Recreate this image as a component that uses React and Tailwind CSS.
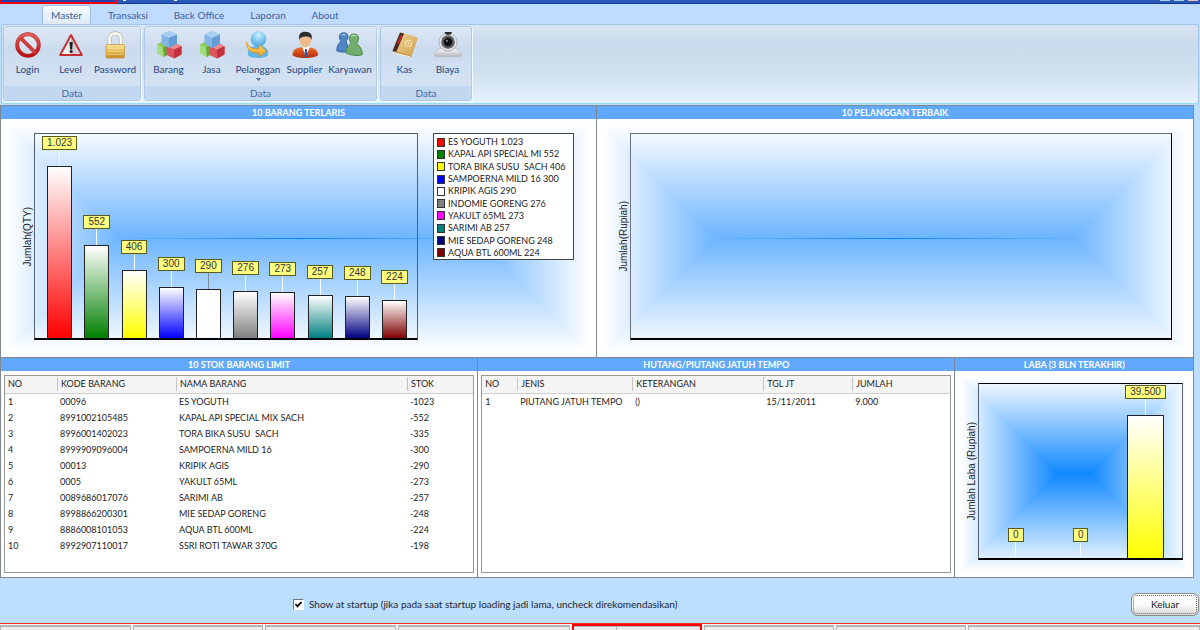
import React, { useState } from 'react';

const BEST_SELLERS = [
  { name: 'ES YOGUTH', value: 1023, label: '1.023', swatch: 'bg-[#ff0000]', bar: 'bg-linear-to-b/srgb from-white to-[#ff0000]' },
  { name: 'KAPAL API SPECIAL MI', value: 552, label: '552', swatch: 'bg-[#008000]', bar: 'bg-linear-to-b/srgb from-white to-[#008000]' },
  { name: 'TORA BIKA SUSU  SACH', value: 406, label: '406', swatch: 'bg-[#ffff00]', bar: 'bg-linear-to-b/srgb from-white to-[#ffff00]' },
  { name: 'SAMPOERNA MILD 16', value: 300, label: '300', swatch: 'bg-[#0000ff]', bar: 'bg-linear-to-b/srgb from-white to-[#0000ff]' },
  { name: 'KRIPIK AGIS', value: 290, label: '290', swatch: 'bg-white', bar: 'bg-white', stem: 'bg-[#7f8f9f]' },
  { name: 'INDOMIE GORENG', value: 276, label: '276', swatch: 'bg-[#808080]', bar: 'bg-linear-to-b/srgb from-white to-[#808080]' },
  { name: 'YAKULT 65ML', value: 273, label: '273', swatch: 'bg-[#ff00ff]', bar: 'bg-linear-to-b/srgb from-white to-[#ff00ff]' },
  { name: 'SARIMI AB', value: 257, label: '257', swatch: 'bg-[#008080]', bar: 'bg-linear-to-b/srgb from-white to-[#008080]' },
  { name: 'MIE SEDAP GORENG', value: 248, label: '248', swatch: 'bg-[#000080]', bar: 'bg-linear-to-b/srgb from-white to-[#000080]' },
  { name: 'AQUA BTL 600ML', value: 224, label: '224', swatch: 'bg-[#800000]', bar: 'bg-linear-to-b/srgb from-white to-[#800000]' },
];

const PROFIT = [
  { name: 'bulan-1', value: 0, label: '0' },
  { name: 'bulan-2', value: 0, label: '0' },
  { name: 'bulan-3', value: 39500, label: '39.500', bar: 'bg-linear-to-b/srgb from-white to-[#ffff00]' },
];

const STOCK_COLUMNS = [
  { title: 'NO', width: 'w-[52px]' },
  { title: 'KODE BARANG', width: 'w-[119px]' },
  { title: 'NAMA BARANG', width: 'w-[231px]' },
  { title: 'STOK', width: '' },
];

const STOCK_ROWS = [
  ['1', '00096', 'ES YOGUTH', '-1023'],
  ['2', '8991002105485', 'KAPAL API SPECIAL MIX SACH', '-552'],
  ['3', '8996001402023', 'TORA BIKA SUSU  SACH', '-335'],
  ['4', '8999909096004', 'SAMPOERNA MILD 16', '-300'],
  ['5', '00013', 'KRIPIK AGIS', '-290'],
  ['6', '0005', 'YAKULT 65ML', '-273'],
  ['7', '0089686017076', 'SARIMI AB', '-257'],
  ['8', '8998866200301', 'MIE SEDAP GORENG', '-248'],
  ['9', '8886008101053', 'AQUA BTL 600ML', '-224'],
  ['10', '8992907110017', 'SSRI ROTI TAWAR 370G', '-198'],
];

const DEBT_COLUMNS = [
  { title: 'NO', width: 'w-[35px]' },
  { title: 'JENIS', width: 'w-[115px]' },
  { title: 'KETERANGAN', width: 'w-[131px]' },
  { title: 'TGL JT', width: 'w-[89px]' },
  { title: 'JUMLAH', width: '' },
];

const DEBT_ROWS = [['1', 'PIUTANG JATUH TEMPO', '()', '15/11/2011', '9.000']];

const ICON = 'w-7 h-7 shrink-0';

const LoginIcon = () => (
  <svg className={ICON} viewBox="0 0 28 28">
    <defs>
      <linearGradient id="banRed" x1="0" y1="0" x2="0" y2="1">
        <stop offset="0" stopColor="#e2605c" />
        <stop offset="1" stopColor="#b80f12" />
      </linearGradient>
      <linearGradient id="banFace" x1="0" y1="0" x2="0" y2="1">
        <stop offset="0" stopColor="#e9eef5" />
        <stop offset="1" stopColor="#c9d6e6" />
      </linearGradient>
    </defs>
    <circle cx="14" cy="14" r="10.8" fill="url(#banFace)" stroke="#b3272a" strokeWidth="3.8" />
    <circle cx="14" cy="14" r="10.8" fill="none" stroke="url(#banRed)" strokeWidth="2.8" />
    <path d="M6.6 7l14.6 14.6" stroke="#b3272a" strokeWidth="3.6" />
    <path d="M6.4 6.8l15 15" stroke="#d2403f" strokeWidth="2.4" />
  </svg>
);

const LevelIcon = () => (
  <svg className={ICON} viewBox="0 0 28 28">
    <defs>
      <linearGradient id="warnFace" x1="0" y1="0" x2="1" y2="0">
        <stop offset="0" stopColor="#ffffff" />
        <stop offset=".5" stopColor="#e8e8e8" />
        <stop offset=".5" stopColor="#c2c4c8" />
        <stop offset="1" stopColor="#e6e8ec" />
      </linearGradient>
    </defs>
    <path d="M14 4L24.800 24H3.200z" fill="url(#warnFace)" stroke="#c62c30" strokeWidth="1.900" strokeLinejoin="round" />
    <path d="M12.400 11h3.400l-.7 7.500h-2z" fill="#222" />
    <circle cx="14.100" cy="20.500" r="1.500" fill="#222" />
  </svg>
);

const PasswordIcon = () => (
  <svg className={ICON} viewBox="0 0 28 28">
    <defs>
      <linearGradient id="lockBody" x1="0" y1="0" x2="0" y2="1">
        <stop offset="0" stopColor="#fbe6a0" />
        <stop offset=".45" stopColor="#e9bd55" />
        <stop offset="1" stopColor="#c08a26" />
      </linearGradient>
    </defs>
    <path d="M8.500 14.500V8c0-7.600 11.500-7.600 11.500 0v6.500" fill="none" stroke="#b0b0a8" strokeWidth="4" />
    <path d="M8.500 14.500V8c0-7.600 11.500-7.600 11.500 0v6.500" fill="none" stroke="#f7f7f2" strokeWidth="2.800" />
    <rect x="5" y="13.500" width="18.500" height="13.500" rx="1" fill="url(#lockBody)" stroke="#c79a45" strokeWidth=".8" />
    <path d="M6 17.500h16.500M6 20.500h16.500M6 23.500h16.500" stroke="#fff1bd" strokeWidth=".8" opacity=".5" />
  </svg>
);

const CubesIcon = () => (
  <svg className={ICON} viewBox="0 0 28 28">
    <path d="M8 10l6 3v9.500L9 26l-7-4v-8.500z" fill="#8ccb5a" />
    <path d="M2 13.500l6 3L9 26l-7-4z" fill="#a5dc7c" />
    <path d="M8 16.500l6-3v9L9 26z" fill="#5da836" />
    <path d="M19 11.500l7.500 3.500v8.500L19 27.500l-7.500-3.500v-9z" fill="#d9545c" />
    <path d="M19 18.500l7.500-3.500v8.500L19 27.500z" fill="#c2323d" />
    <path d="M11.500 15l7.500 3.500 7.500-3.500-7.500-3.500z" fill="#ec8d90" />
    <path d="M14 0l8 3.500v9L14 17l-7.500-4.500v-9z" fill="#82b5e6" />
    <path d="M6.500 3.500L14 0l8 3.500L14 7z" fill="#a8cff2" />
    <path d="M14 7l8-3.500v9L14 17z" fill="#649dd8" />
  </svg>
);

const CustomerIcon = () => (
  <svg className={ICON} viewBox="0 0 28 28">
    <defs>
      <radialGradient id="custHead" cx=".5" cy=".25" r=".8">
        <stop offset="0" stopColor="#c8efff" />
        <stop offset="1" stopColor="#3ba2dc" />
      </radialGradient>
      <linearGradient id="custArrow" x1="0" y1="0" x2="0" y2="1">
        <stop offset="0" stopColor="#ffe07a" />
        <stop offset="1" stopColor="#ef9a1c" />
      </linearGradient>
    </defs>
    <path d="M4 24c-1-8 5-9 10.500-9S25 17 24 24c-1 4-19 4-20 0z" fill="#5eb7e8" />
    <circle cx="14.500" cy="8" r="7.800" fill="url(#custHead)" />
    <path d="M2.500 11c1.500 5 6 7.500 12.500 6.500v-4L22.500 20 15 26v-4C7 22.500 2 18 2.500 11z" fill="url(#custArrow)" stroke="#d98a14" strokeWidth=".7" />
  </svg>
);

const SupplierIcon = () => (
  <svg className={ICON} viewBox="0 0 28 28">
    <defs>
      <linearGradient id="suitRed" x1="0" y1="0" x2="0" y2="1">
        <stop offset="0" stopColor="#f0702a" />
        <stop offset="1" stopColor="#b52a08" />
      </linearGradient>
    </defs>
    <path d="M1.500 24c0-6 5-8 12.500-8s13 2 13 8c-2 4-23.500 4-25.500 0z" fill="url(#suitRed)" />
    <path d="M11 15.500l4 10 4-10z" fill="#fff" />
    <path d="M14 18h2l1 8h-3.500z" fill="#2c5fb0" />
    <ellipse cx="14.500" cy="9" rx="5.600" ry="7.500" fill="#efbb8c" />
    <path d="M8.500 9C7 3 10 .8 14 .8c5.500 0 8 3 6.300 8.200-.8-3-2-3.700-5-3.500-3 .2-5.500 0-6.800 3.500z" fill="#2b2b2f" />
  </svg>
);

const EmployeeIcon = () => (
  <svg className={ICON} viewBox="0 0 28 28">
    <path d="M3.500 5.500C3.500.5 12 .5 12 5.500c0 2.500-1 3.500-2 4.500l3 10C9 21.500 4 21.500.8 19.800c0-4 1.200-7 4.200-9.300-1-1.300-1.500-2.800-1.500-5z" fill="#4f86c6" stroke="#2f63a5" strokeWidth="1" />
    <path d="M13.500 7c0-5.300 9-5.300 9 0 0 2.700-1 4-2 5.500 3.500 2.500 5.500 6 6 11-3.500 1.800-11 1.200-16.500-1.500.3-4 1.500-7 5-9.500-1-1.500-1.500-3-1.500-5.500z" fill="#74ad70" stroke="#4a8a4e" strokeWidth="1" />
    <path d="M15.500 5.800c.8-1.800 3.700-2 5-.4" stroke="#b2dca9" strokeWidth="1.200" fill="none" />
    <path d="M5.500 4.500c.8-1.300 3-1.500 4-.5" stroke="#a5c6ea" strokeWidth="1.200" fill="none" />
  </svg>
);

const CashIcon = () => (
  <svg className={ICON} viewBox="0 0 28 28">
    <defs>
      <linearGradient id="bookTan" x1="0" y1="0" x2="1" y2="1">
        <stop offset="0" stopColor="#f0d391" />
        <stop offset="1" stopColor="#d0a352" />
      </linearGradient>
    </defs>
    <path d="M9 2.500l17.500 5-6.500 19L2 21z" fill="#b58c48" />
    <path d="M10 1.500l17 5-7 18.500L4 20z" fill="url(#bookTan)" />
    <path d="M9 1.500l4 1L5.500 20.500 1.500 20z" fill="#4a2a22" />
    <path d="M10.500 4.500l-3.500 8" stroke="#d9262b" strokeWidth="1.800" />
    <circle cx="17.500" cy="12.500" r="3.200" fill="none" stroke="#fbecc4" strokeWidth="1" />
    <circle cx="17.500" cy="12.500" r="1" fill="#fbecc4" />
    <path d="M2 21.500l17.500 4.500" stroke="#fff3d2" strokeWidth="1" />
  </svg>
);

const CostIcon = () => (
  <svg className={ICON} viewBox="0 0 28 28">
    <defs>
      <linearGradient id="camBase" x1="0" y1="0" x2="0" y2="1">
        <stop offset="0" stopColor="#ffffff" />
        <stop offset="1" stopColor="#b4b7bd" />
      </linearGradient>
    </defs>
    <path d="M.5 24c1-4.500 4-7 13.500-7s12.500 2.500 13.500 7c0 1.300-1 1.800-2 1.800H2.500c-1 0-2-.5-2-1.800z" fill="url(#camBase)" stroke="#b2b6bd" strokeWidth=".6" />
    <circle cx="14" cy="11" r="9" fill="#e3e5e8" stroke="#a2a5ab" strokeWidth=".8" />
    <circle cx="14" cy="11" r="6.800" fill="#5a5c60" />
    <circle cx="14" cy="11" r="4.300" fill="#111" />
    <circle cx="13" cy="9.800" r="1" fill="#8a9098" />
    <path d="M10.500 1h7.500l-1.500 2.800h-4.500z" fill="#2b2b2e" />
  </svg>
);

const TABS = [
  { name: 'Master', width: 'w-[49px]' },
  { name: 'Transaksi', width: 'w-[74px]' },
  { name: 'Back Office', width: 'w-[68px]' },
  { name: 'Laporan', width: 'w-[70px]' },
  { name: 'About', width: 'w-[44px]' },
];

const GROUPS = [
  [
    { name: 'Login', icon: LoginIcon, width: 'w-[43px]' },
    { name: 'Level', icon: LevelIcon, width: 'w-[43px]' },
    { name: 'Password', icon: PasswordIcon, width: 'w-[46px]' },
  ],
  [
    { name: 'Barang', icon: CubesIcon, width: 'w-[43px]' },
    { name: 'Jasa', icon: CubesIcon, width: 'w-[43px]' },
    { name: 'Pelanggan', icon: CustomerIcon, width: 'w-[50px]', menu: true },
    { name: 'Supplier', icon: SupplierIcon, width: 'w-[43px]' },
    { name: 'Karyawan', icon: EmployeeIcon, width: 'w-[48px]' },
  ],
  [
    { name: 'Kas', icon: CashIcon, width: 'w-[43px]' },
    { name: 'Biaya', icon: CostIcon, width: 'w-[43px]' },
  ],
];

const TitleBar = () => (
  <div className="flex h-1 items-start bg-[#2a58b8] border-b border-[#0d3a94]">
    <div className="h-1 w-[117px] bg-[#2340a8] border-x-2 border-b-2 border-[#f00010]" />
    <div className="ml-[6px] h-px w-[3px] bg-white" />
    <div className="ml-[48px] h-px w-[3px] bg-white" />
    <div className="ml-auto mr-[2px] flex gap-1">
      <div className="h-px w-[10px] bg-[#a9d0e0]" />
      <div className="h-px w-[10px] bg-[#a9d0e0]" />
      <div className="h-px w-[10px] bg-[#f0c0b0]" />
    </div>
  </div>
);

const RibbonGroup = ({ items }) => (
  <div className="flex flex-col h-[75px] border border-[#b0c9e6] rounded-[3px] bg-[linear-gradient(to_bottom,#dde8f5,#cbdbee_30%,#d8e6f6)] shadow-[1px_1px_0_#f3f9ff]">
    <div className="flex flex-1 px-[2px] pt-[4px]">
      {items.map(({ name, icon: Icon, width, menu }) => (
        <button key={name} className={`flex flex-col items-center ${width}`}>
          <Icon />
          <span className="mt-[4px] leading-[12px] whitespace-nowrap">{name}</span>
          {menu && (
            <svg className="mt-[3px] h-[3px] w-[5px]" viewBox="0 0 5 3">
              <path d="M0 0h5L2.500 3z" fill="#4d6fa5" />
            </svg>
          )}
        </button>
      ))}
    </div>
    <div className="h-[14px] leading-[14px] text-center text-[#3e6aaa] bg-[#c1d8f0] rounded-b-[2px]">Data</div>
  </div>
);

// Rectangular gradient: of the horizontal and the vertical ramp the lighter one wins.
const ChartBackdrop = ({ strong }) =>
  strong ? (
    <div className="absolute inset-0 bg-blend-lighten bg-[linear-gradient(to_right,#fff_6px,#1088ff_103px,#1088ff_calc(100%-103px),#fff_calc(100%-6px)),linear-gradient(to_bottom,#fff_6px,#1088ff_50%,#fff_calc(100%-6px))]" />
  ) : (
    <div className="absolute inset-0">
      <div className="absolute inset-0 bg-blend-lighten bg-[linear-gradient(to_right,#fff_6px,#6db5ff_119px,#6db5ff_calc(100%-119px),#fff_calc(100%-6px)),linear-gradient(to_bottom,#fff_6px,#6db5ff_50%,#fff_calc(100%-6px))]" />
      <div className="absolute inset-x-[119px] top-1/2 h-px bg-linear-to-r/srgb from-[#6db5ff] via-[#0a84ff] to-[#6db5ff]" />
    </div>
  );

const Bars = ({ data, max, barWidth }) => (
  <div className="flex h-full items-end">
    {data.map((item) => (
      <div key={item.name} className="flex flex-1 h-full flex-col items-center justify-end">
        <div className="flex h-[14px] items-center border border-[#5a5a1e] bg-[#ffff80] px-1 leading-[12px] text-[#333]">
          {item.label}
        </div>
        <div className={`h-4 w-px shrink-0 ${item.stem || 'bg-[#f4faff]'}`} />
        {item.value > 0 && (
          <div
            className={`shrink-0 border border-b-0 border-[#222] ${barWidth} ${item.bar}`}
            style={{ height: `${(item.value / max) * 100}%` }}
          />
        )}
      </div>
    ))}
  </div>
);

const AxisLabel = ({ children, width }) => (
  <div className={`flex shrink-0 items-center justify-end ${width}`}>
    <span className="[writing-mode:vertical-rl] rotate-180 leading-[12px] whitespace-nowrap text-[#222]">{children}</span>
  </div>
);

const Legend = () => (
  <ul className="flex h-[127px] w-[141px] shrink-0 flex-col border border-[#444] bg-white pt-[2px] pl-[3px] font-[Lato,sans-serif] text-[9px] text-[#222]">
    {BEST_SELLERS.map((item) => (
      <li key={item.name} className="flex flex-1 items-center gap-[3px] whitespace-pre leading-[12px]">
        <span className={`h-[9px] w-[8px] border border-[#333] ${item.swatch}`} />
        {`${item.name} ${item.label}`}
      </li>
    ))}
  </ul>
);

const Panel = ({ title, children }) => (
  <section className="flex min-w-0 flex-col border-l border-t border-[#808890] bg-white">
    <h2 className="h-[13px] bg-[#61a9ff] text-center font-[Lato,sans-serif] text-[9px] leading-[13px] font-bold text-white">{title}</h2>
    {children}
  </section>
);

const DataTable = ({ columns, rows, caption }) => (
  <div className="mx-[3px] mt-1 mb-1 flex-1 border border-[#999] bg-white">
    <table aria-label={caption} className="w-full table-fixed border-collapse text-left font-[Lato,sans-serif] text-[9px] text-[#222]">
      <thead>
        <tr className="h-[17px] border-b border-[#d0d0d0] bg-[#f5f5f5]">
          {columns.map((col, i) => (
            <th key={col.title} className={`p-0 font-normal leading-[14px] ${col.width}`}>
              <div className={i ? 'border-l border-[#c4c4c4] pl-[3px]' : 'pl-[3px]'}>{col.title}</div>
            </th>
          ))}
        </tr>
      </thead>
      <tbody>
        {rows.map((row) => (
          <tr key={row[0]} className="h-4">
            {row.map((cell, i) => (
              <td key={columns[i].title} className="p-0 pl-[3px] leading-[15px] whitespace-pre">
                {cell}
              </td>
            ))}
          </tr>
        ))}
      </tbody>
    </table>
  </div>
);

const StatusCell = ({ width }) => <div className={`mt-px h-full border-t-2 border-l border-r border-[#b5b5b5] bg-[#ebebeb] ${width}`} />;

const StatusBar = () => (
  <footer className="flex h-[7px] gap-[2px] overflow-hidden border-t border-[#f0301c] bg-[#f4f4f4]">
    <StatusCell width="w-[131px]" />
    <StatusCell width="w-[130px]" />
    <StatusCell width="w-[131px]" />
    <StatusCell width="w-[172px]" />
    <div className="flex h-full w-[130px] border-x-2 border-t-2 border-[#f00] bg-[#ebebeb]">
      <div className="w-[43px] border-r border-t border-[#b5b5b5]" />
      <div className="flex-1 border-t border-[#b5b5b5]" />
    </div>
    <StatusCell width="w-[130px]" />
    <StatusCell width="w-[130px]" />
    <StatusCell width="flex-1" />
  </footer>
);

const App = () => {
  const [activeTab, setActiveTab] = useState('Master');
  const [showAtStartup, setShowAtStartup] = useState(true);

  return (
    <div className="flex min-h-screen flex-col bg-[#bddfff] font-[Lato,sans-serif] text-[10px]">
      <TitleBar />

      <nav className="flex h-5 items-end bg-[#bfdbff] pl-[42px] text-[#3a5f9c]">
        {TABS.map((tab) => (
          <button
            key={tab.name}
            onClick={() => setActiveTab(tab.name)}
            className={`h-[19px] leading-[18px] whitespace-nowrap ${tab.width} ${
              activeTab === tab.name
                ? 'rounded-t-[3px] border border-b-0 border-[#9cc0ec] bg-linear-to-b from-[#f5faff] to-[#dfe9f6] shadow-[0_0_1px_#fff]'
                : ''
            }`}
          >
            {tab.name}
          </button>
        ))}
      </nav>

      <div className="mx-px flex h-20 gap-[3px] rounded-[3px] border border-[#a5c4ea] border-b-[#8fe0f6] bg-[linear-gradient(to_bottom,#dbe6f4,#c9daec_22%,#cfe0ef_60%,#e6f2ff)] px-px pt-px text-[#27457c]">
        {GROUPS.map((items) => (
          <RibbonGroup key={items[0].name} items={items} />
        ))}
      </div>

      <main className="mt-px mr-[6px] border-r border-b border-[#808890] font-['Liberation_Sans',Arial,sans-serif]">
        <div className="grid grid-cols-[596fr_597fr]">
          <Panel title="10 BARANG TERLARIS">
            <div className="relative h-[238px]">
              <ChartBackdrop />
              <div className="relative flex h-full pt-[14px] pr-[22px] pb-[17px]">
                <AxisLabel width="w-[33px]">Jumlah(QTY)</AxisLabel>
                <div className="mr-[15px] flex-1 border border-b-2 border-[#55606c] border-b-black pr-1 pl-[6px]">
                  <Bars data={BEST_SELLERS} max={1210} barWidth="w-[25px]" />
                </div>
                <Legend />
              </div>
            </div>
          </Panel>
          <Panel title="10 PELANGGAN TERBAIK">
            <div className="relative h-[238px]">
              <ChartBackdrop />
              <div className="relative flex h-full pt-[14px] pr-[21px] pb-[17px]">
                <AxisLabel width="w-[33px]">Jumlah(Rupiah)</AxisLabel>
                <div className="flex-1 border border-b-2 border-[#66707c] border-r-black border-b-black" />
              </div>
            </div>
          </Panel>
        </div>

        <div className="grid grid-cols-[2fr_2fr_1fr]">
          <Panel title="10 STOK BARANG LIMIT">
            <DataTable caption="10 stok barang limit" columns={STOCK_COLUMNS} rows={STOCK_ROWS} />
          </Panel>
          <Panel title="HUTANG/PIUTANG JATUH TEMPO">
            <DataTable caption="Hutang/piutang jatuh tempo" columns={DEBT_COLUMNS} rows={DEBT_ROWS} />
          </Panel>
          <Panel title="LABA (3 BLN TERAKHIR)">
            <div className="relative h-[206px]">
              <ChartBackdrop strong />
              <div className="relative flex h-full pt-[12px] pr-[10px] pb-[17px]">
                <AxisLabel width="w-[23px]">Jumlah Laba (Rupiah)</AxisLabel>
                <div className="flex-1 border border-b-2 border-[#55606c] border-y-black px-1">
                  <Bars data={PROFIT} max={48000} barWidth="w-[37px]" />
                </div>
              </div>
            </div>
          </Panel>
        </div>
      </main>

      <div className="flex flex-1 items-center pt-[8px] pr-px pl-[293px]">
        <label className="flex items-center gap-[5px] text-[#1b2430]">
          <span className="relative h-[11px] w-[11px]">
            <input
              type="checkbox"
              checked={showAtStartup}
              onChange={(e) => setShowAtStartup(e.target.checked)}
              className="block h-[11px] w-[11px] appearance-none border border-t-[#777] border-l-[#777] border-r-white border-b-white bg-white"
            />
            {showAtStartup && (
              <svg className="pointer-events-none absolute inset-0 h-[11px] w-[11px]" viewBox="0 0 11 11">
                <path d="M2.500 5l2 2.300L8.500 3" fill="none" stroke="#000" strokeWidth="1.800" />
              </svg>
            )}
          </span>
          Show at startup (jika pada saat startup loading jadi lama, uncheck direkomendasikan)
        </label>
        <button className="ml-auto h-[23px] w-[68px] rounded-[6px] border border-[#8b8b8b] bg-linear-to-b from-white via-[#fafafa] to-[#d9d9d9] p-px text-[#222]">
          <span className="flex h-full items-center justify-center rounded-[4px] border border-dotted border-[#666]">Keluar</span>
        </button>
      </div>

      <StatusBar />
    </div>
  );
};

export default App;
